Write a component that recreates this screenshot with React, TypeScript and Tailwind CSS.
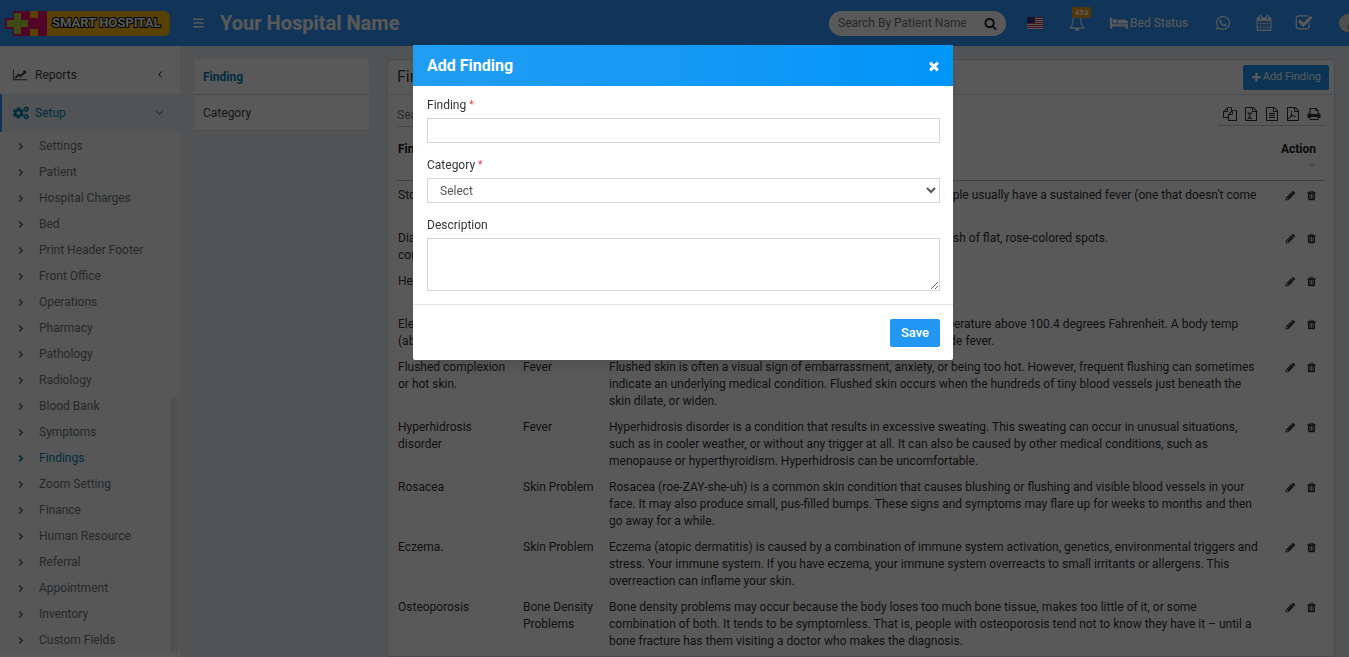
import React, { useState } from "react";
import { FaAngleRight, FaBars, FaCogs, FaWhatsapp, FaUser } from "react-icons/fa";

const paths = {
  filesO: "M1696 384q40 0 68 28t28 68v1216q0 40-28 68t-68 28H736q-40 0-68-28t-28-68v-288H96q-40 0-68-28t-28-68V672q0-40 20-88t48-76l408-408q28-28 76-48t88-20h416q40 0 68 28t28 68v328q68-40 128-40h416zm-544 213L853 896h299V597zM512 213L213 512h299V213zm196 647l316-316V128H640v416q0 40-28 68t-68 28H128v640h512v-256q0-40 20-88t48-76zm956 804V512h-416v416q0 40-28 68t-68 28H768v640h896z",
  file: "M1596 380q28 28 48 76t20 88v1152q0 40-28 68t-68 28H224q-40 0-68-28t-28-68V96q0-40 28-68T224 0h896q40 0 88 20t76 48zm-444-244v376h376q-10-29-22-41l-313-313q-12-12-41-22zm384 1528V640h-416q-40 0-68-28t-28-68V128H256v1536h1280z",
  fileLines: "M512 800q0-14 9-23t23-9h704q14 0 23 9t9 23v64q0 14-9 23t-23 9H544q-14 0-23-9t-9-23v-64zm736 224q14 0 23 9t9 23v64q0 14-9 23t-23 9H544q-14 0-23-9t-9-23v-64q0-14 9-23t23-9h704zm0 256q14 0 23 9t9 23v64q0 14-9 23t-23 9H544q-14 0-23-9t-9-23v-64q0-14 9-23t23-9h704z",
  excelX: "M429 1430v106h281v-106h-75l103-161 60 117q5 10 10 22l5 22h-71v106h291v-106h-68l-206-300 203-309h66V715H756v106h73l-98 155-70-122-12-33h64V715H433v106h68l199 297-202 312z",
  pdfA: "M894 1071q33 26 84 56 59-7 117-7 147 0 177 49 16 22 2 52 0 1-1 2l-2 2v1q-6 38-71 38-48 0-115-20t-130-53q-221 24-392 83-153 262-242 262-15 0-28-7l-24-12q-1-1-6-5-10-10-6-36 9-40 56-91.500t132-96.500q14-9 23 6 2 2 2 4 52-85 107-197 68-136 104-262-24-82-30.500-159.500T655 552q11-40 42-40h22q23 0 35 15 18 21 9 68-2 6-4 8 1 3 1 8v30q-2 123-14 192 55 164 148 238z",
  pencil: "M491 1536l91-91-235-235-91 91v107h128v128h107zm523-928q0-22-22-22-10 0-17 7l-542 542q-7 7-7 17 0 22 22 22 10 0 17-7l542-542q7-7 7-17zm-54-192l416 416-832 832H128v-416zm683 96q0 53-37 90l-166 166-416-416 166-165q36-38 90-38 53 0 91 38l235 234q37 39 37 91z",
  trash: "M704 1376V672q0-14-9-23t-23-9h-64q-14 0-23 9t-9 23v704q0 14 9 23t23 9h64q14 0 23-9t9-23zm256 0V672q0-14-9-23t-23-9h-64q-14 0-23 9t-9 23v704q0 14 9 23t23 9h64q14 0 23-9t9-23zm256 0V672q0-14-9-23t-23-9h-64q-14 0-23 9t-9 23v704q0 14 9 23t23 9h64q14 0 23-9t9-23zM672 384h448l-48-117q-7-9-17-11H738q-10 2-17 11zm928 32v64q0 14-9 23t-23 9h-96v948q0 83-47 143.500t-113 60.500H480q-66 0-113-58.500T320 1464V512h-96q-14 0-23-9t-9-23v-64q0-14 9-23t23-9h309l70-167q15-37 54-63t79-26h320q40 0 79 26t54 63l70 167h309q14 0 23 9t9 23z",
  print: "M448 1536h896v-256H448v256zm0-640h896V512h-160q-40 0-68-28t-28-68V256H448v640zm1152 64q0-26-19-45t-45-19-45 19-19 45 19 45 45 19 45-19 19-45zm128 0v416q0 13-9.500 22.500t-22.500 9.500h-224v160q0 40-28 68t-68 28H416q-40 0-68-28t-28-68v-160H96q-13 0-22.500-9.500T64 1376V960q0-79 56.500-135.500T256 768h64V224q0-40 28-68t68-28h672q40 0 88 20t76 48l152 152q28 28 48 76t20 88v256h64q79 0 135.500 56.500T1728 960z",
  angleRight: "M1171 960q0 13-10 23l-466 466q-10 10-23 10t-23-10l-50-50q-10-10-10-23t10-23l393-393-393-393q-10-10-10-23t10-23l50-50q10-10 23-10t23 10l466 466q10 10 10 23z",
  bell: "M912 1696q0-16-16-16-59 0-101.500-42.500T752 1536q0-16-16-16t-16 16q0 73 51.500 124.500T896 1712q16 0 16-16zM246 1408h1300q-266-300-266-832 0-51-24-105t-69-103-121.500-80.500T896 256t-169.500 31.500T605 368t-69 103-24 105q0 532-266 832zm1482 0q0 52-38 90t-90 38h-448q0 106-75 181t-181 75-181-75-75-181H192q-52 0-90-38t-38-90q50-42 91-88t85-119.500 74.500-158.500 50-206T384 576q0-152 117-282.500T808 135q-8-19-8-39 0-40 28-68t68-28 68 28 28 68q0 20-8 39 190 28 307 158.500T1408 576q0 139 19.500 260t50 206 74.500 158.500 85 119.500 91 88z",
  times: "M1490 1322q0 40-28 68l-136 136q-28 28-68 28t-68-28l-294-294-294 294q-28 28-68 28t-68-28l-136-136q-28-28-28-68t28-68l294-294-294-294q-28-28-28-68t28-68l136-136q28-28 68-28t68 28l294 294 294-294q28-28 68-28t68 28l136 136q28 28 28 68t-28 68l-294 294 294 294q28 28 28 68z",
  plus: "M1600 736v192q0 40-28 68t-68 28h-416v416q0 40-28 68t-68 28H800q-40 0-68-28t-28-68v-416H288q-40 0-68-28t-28-68V736q0-40 28-68t68-28h416V224q0-40 28-68t68-28h192q40 0 68 28t28 68v416h416q40 0 68 28t28 68z",
  search: "M1216 832q0-185-131.500-316.500T768 384 451.500 515.500 320 832t131.500 316.500T768 1280t316.500-131.500T1216 832zm512 832q0 52-38 90t-90 38q-54 0-90-38l-343-342q-179 124-399 124-143 0-273.500-55.500t-225-150-150-225T64 832t55.500-273.500 150-225 225-150T768 128t273.500 55.500 225 150 150 225T1472 832q0 220-124 399l343 343q37 37 37 90z",
  checkSquare: "M1472 930v318q0 119-84.500 203.500T1184 1536H352q-119 0-203.500-84.500T64 1248V416q0-119 84.500-203.500T352 128h832q63 0 117 25 15 7 18 23 3 17-9 29l-49 49q-10 10-23 10-3 0-9-2-23-6-45-6H352q-66 0-113 47t-47 113v832q0 66 47 113t113 47h832q66 0 113-47t47-113v-254q0-13 9-22l64-64q10-10 23-10 6 0 12 3 20 8 20 29zm231-489l-814 814q-24 24-57 24t-57-24l-430-430q-24-24-24-57t24-57l110-110q24-24 57-24t57 24l263 263 647-647q24-24 57-24t57 24l110 110q24 24 24 57t-24 57z",
  lineChart: "M2048 1536v128H0V128h128v1408h1920zM1920 288v435q0 21-19.500 29.500T1865 745l-121-121-633 633q-10 10-23 10t-23-10L832 1024l-416 416-192-192 585-585q10-10 23-10t23 10l233 233 464-464-121-121q-16-16-7.500-35.500T1453 256h435q14 0 23 9t9 23z",
  bed: "M256 1024h1728q26 0 45 19t19 45v448h-256v-256H256v256H0V320q0-26 19-45t45-19h128q26 0 45 19t19 45v704zm576-320q0-106-75-181t-181-75-181 75-75 181 75 181 181 75 181-75 75-181zm1216 256v-64q0-159-112.500-271.500T1664 512H960q-26 0-45 19t-19 45v384h1152z",
  calendar: "M192 1664h288v-288H192v288zm352 0h320v-288H544v288zm-352-352h288V992H192v320zm352 0h320V992H544v320zM192 928h288V640H192v288zm736 736h320v-288H928v288zM544 928h320V640H544v288zm768 736h288v-288h-288v288zm-384-352h320V992H928v320zM576 448V160q0-13-9.500-22.500T544 128h-64q-13 0-22.500 9.500T448 160v288q0 13 9.500 22.500T480 480h64q13 0 22.500-9.500T576 448zm736 864h288V992h-288v320zM928 928h320V640H928v288zm384 0h288V640h-288v288zm32-480V160q0-13-9.500-22.500T1312 128h-64q-13 0-22.500 9.500T1216 160v288q0 13 9.500 22.500t22.500 9.500h64q13 0 22.500-9.500t9.500-22.500zm384-64v1280q0 52-38 90t-90 38H192q-52 0-90-38t-38-90V384q0-52 38-90t90-38h128v-96q0-66 47-113T480 0h64q66 0 113 47t47 113v96h384v-96q0-66 47-113t113-47h64q66 0 113 47t47 113v96h128q52 0 90 38t38 90z",
};

function Icon({ d, className, wide = false }: { d: string; className: string; wide?: boolean }) {
  return (
    <svg viewBox={wide ? "0 0 2048 1792" : "0 0 1792 1792"} fill="currentColor" className={className} aria-hidden="true">
      <path d={d} />
    </svg>
  );
}

const setupLinks = [
  "Settings", "Patient", "Hospital Charges", "Bed", "Print Header Footer", "Front Office", "Operations",
  "Pharmacy", "Pathology", "Radiology", "Blood Bank", "Symptoms", "Findings", "Zoom Setting", "Finance",
  "Human Resource", "Referral", "Appointment", "Inventory", "Custom Fields",
];

const exportIcons = [
  { title: "Copy", d: paths.filesO },
  { title: "Excel", d: paths.file + paths.excelX },
  { title: "CSV", d: paths.file + paths.fileLines },
  { title: "PDF", d: paths.file + paths.pdfA },
  { title: "Print", d: paths.print },
];

const findings = [
  {
    name: "Stomach pain",
    category: "Fever",
    description: "Typhoid fever and paratyphoid fever have similar symptoms. People usually have a sustained fever (one that doesn't come and go).",
  },
  {
    name: "Diarrhea or constipation",
    category: "Fever",
    description: "Some people with typhoid fever or paratyphoid fever develop a rash of flat, rose-colored spots.",
  },
  { name: "Headache", category: "Fever", description: "Headache and general weakness are common\nsigns of the illness." },
  {
    name: "Elevated body temp (above 100.4)",
    category: "Fever",
    description: "The medical community generally defines a fever as a body temperature above 100.4 degrees Fahrenheit. A body temp between 100.4 and 102.2 degree is usually considered a low-grade fever.",
  },
  {
    name: "Flushed complexion or hot skin.",
    category: "Fever",
    description: "Flushed skin is often a visual sign of embarrassment, anxiety, or being too hot. However, frequent flushing can sometimes indicate an underlying medical condition. Flushed skin occurs when the hundreds of tiny blood vessels just beneath the skin dilate, or widen.",
  },
  {
    name: "Hyperhidrosis disorder",
    category: "Fever",
    description: "Hyperhidrosis disorder is a condition that results in excessive sweating. This sweating can occur in unusual situations, such as in cooler weather, or without any trigger at all. It can also be caused by other medical conditions, such as menopause or hyperthyroidism. Hyperhidrosis can be uncomfortable.",
  },
  {
    name: "Rosacea",
    category: "Skin Problem",
    description: "Rosacea (roe-ZAY-she-uh) is a common skin condition that causes blushing or flushing and visible blood vessels in your face. It may also produce small, pus-filled bumps. These signs and symptoms may flare up for weeks to months and then go away for a while.",
  },
  {
    name: "Eczema.",
    category: "Skin Problem",
    description: "Eczema (atopic dermatitis) is caused by a combination of immune system activation, genetics, environmental triggers and stress. Your immune system. If you have eczema, your immune system overreacts to small irritants or allergens. This overreaction can inflame your skin.",
  },
  {
    name: "Osteoporosis",
    category: "Bone Density Problems",
    description: "Bone density problems may occur because the body loses too much bone tissue, makes too little of it, or some combination of both. It tends to be symptomless. That is, people with osteoporosis tend not to know they have it – until a bone fracture has them visiting a doctor who makes the diagnosis.",
  },
];

function Logo() {
  return (
    <a href="#" className="flex h-[25px] w-[165px] shrink-0 items-center" aria-label="Smart Hospital">
      <svg viewBox="0 0 42 25" className="h-[25px] w-[42px] shrink-0" aria-hidden="true">
        <path d="M8 0H42V25H8V18H0V7H8Z" fill="#ee1070" />
        <path d="M25 0h8v7h-8zM25 18h8v7h-8z" fill="#fdbb0b" />
        <path d="M9 2h7v7h7v7h-7v7H9v-7H2V9h7z" fill="#b4d63c" />
      </svg>
      <span className="flex h-[25px] flex-1 items-center rounded-r-md bg-[#fdbb0b] pl-[5px] font-['Liberation_Sans_Narrow','Roboto',sans-serif] text-[13px] font-bold whitespace-nowrap text-white [paint-order:stroke_fill] [-webkit-text-stroke:2px_#000]">
        SMART HOSPITAL
      </span>
    </a>
  );
}

function UsFlag() {
  return (
    <svg viewBox="0 0 16 12" className="h-3 w-4" aria-hidden="true">
      <path d="M0 0h16v12H0z" fill="#f3eef0" />
      <path d="M0 0h16v1H0zM0 2h16v1H0zM0 4h16v1H0zM0 6h16v1H0zM0 8h16v1H0zM0 10h16v1H0z" fill="#d3455b" />
      <path d="M0 0h8v6H0z" fill="#363b78" />
    </svg>
  );
}

function TopBar() {
  return (
    <header className="flex h-[46px] shrink-0 items-center overflow-hidden bg-[#3398fb] pl-[5px] text-white">
      <Logo />
      <button type="button" aria-label="Toggle navigation" className="ml-[23px]">
        <FaBars className="h-3 w-[11px]" />
      </button>
      <span className="ml-4 text-xl leading-[26px] font-bold whitespace-nowrap">Your Hospital Name</span>
      <div className="-mr-[15px] ml-auto flex items-center">
        <form className="flex h-[25px] w-[177px] items-center rounded-full bg-white pr-[9px] pl-[9px]">
          <input type="text" aria-label="Search By Patient Name" placeholder="Search By Patient Name" className="w-[128px] text-xs outline-none placeholder:text-[#777]" />
          <button type="submit" aria-label="Search" className="ml-auto text-[#222]">
            <Icon d={paths.search} className="h-[13px] w-[13px]" />
          </button>
        </form>
        <a href="#" aria-label="Language" className="ml-[21px]"><UsFlag /></a>
        <a href="#" aria-label="Notifications" className="relative ml-[26px]">
          <Icon d={paths.bell} className="h-4 w-4" />
          <span className="absolute -top-2 left-[3px] flex h-[11px] w-[19px] items-center justify-center rounded-xs bg-[#f39c12] text-[8px] font-bold">453</span>
        </a>
        <a href="#" className="ml-[25px] flex items-center gap-[2px] text-xs">
          <Icon d={paths.bed} wide className="h-4 w-[18px]" />
          Bed Status
        </a>
        <a href="#" aria-label="WhatsApp" className="ml-[27px]"><FaWhatsapp className="h-4 w-4" /></a>
        <a href="#" aria-label="Calendar" className="ml-[25px]"><Icon d={paths.calendar} className="h-4 w-4" /></a>
        <a href="#" aria-label="Tasks" className="ml-[23px]"><Icon d={paths.checkSquare} className="h-[18px] w-[18px]" /></a>
        <a href="#" aria-label="Profile" className="ml-[26px] flex h-[18px] w-[25px] items-center justify-center rounded-full bg-[#e5e5e5] text-[#aaa]">
          <FaUser className="h-3 w-3" />
        </a>
      </div>
    </header>
  );
}

function Sidebar() {
  return (
    <aside className="relative w-[180px] shrink-0 bg-white text-xs text-[#444]">
      <a href="#" className="mt-[10px] flex h-[38px] items-center pr-[14px] pl-[13px]">
        <Icon d={paths.lineChart} wide className="h-3 w-[14px]" />
        <span className="ml-2">Reports</span>
        <Icon d={paths.angleRight} className="ml-auto h-3 w-3 rotate-180" />
      </a>
      <a href="#" className="flex h-[38px] items-center border-l-2 border-[#3398fb] bg-[#e9edf4] pr-[14px] pl-[11px] text-[#0084b4]">
        <FaCogs className="h-[14px] w-4" />
        <span className="ml-[6px]">Setup</span>
        <Icon d={paths.angleRight} className="ml-auto h-3 w-3 rotate-90" />
      </a>
      <nav className="bg-[#f7faf7] pt-px text-[#70757f]">
        {setupLinks.map((name) => (
          <a
            key={name}
            href="#"
            className={name === "Findings" ? "flex h-[26px] items-center pl-4 text-[#0084b4]" : "flex h-[26px] items-center pl-4"}
          >
            <FaAngleRight className="h-[11px] w-[10px]" />
            <span className="ml-[13px]">{name}</span>
          </a>
        ))}
      </nav>
      <div className="absolute right-px bottom-1 h-[255px] w-[9px] rounded-full bg-[#e6e6e6]" />
    </aside>
  );
}

function FindingPanel({ onAdd }: { onAdd: () => void }) {
  return (
    <section className="min-w-0 flex-1 rounded-t-sm border border-[#cfd4dc] bg-white">
      <div className="flex h-[35px] items-center justify-between border-b border-[#dfe2e6] pr-[5px] pl-[9px]">
        <h1 className="text-base text-[#444]">Finding List</h1>
        <button type="button" onClick={onAdd} className="flex h-[25px] items-center gap-px rounded-xs bg-[#2196f3] px-2 text-[11px] text-white">
          <Icon d={paths.plus} className="h-[11px] w-[11px]" />
          Add Finding
        </button>
      </div>
      <div className="px-[9px]">
        <div className="mt-2 flex items-start justify-between">
          <input type="text" aria-label="Search findings" placeholder="Search..." className="h-6 w-[150px] border-b border-[#ccc] text-xs outline-none placeholder:text-[#777]" />
          <div className="flex h-[23px] items-center gap-[7px] border-b border-[#ccc] pr-1 pl-[5px] text-[#333]">
            {exportIcons.map((item) => (
              <button key={item.title} type="button" title={item.title}>
                <Icon d={item.d} className="h-[14px] w-[14px]" />
              </button>
            ))}
          </div>
        </div>
        <table className="mt-[7px] w-full table-fixed text-xs leading-[17px] text-[#333]">
          <thead>
            <tr className="h-[46px] border-b border-[#bbb] text-left align-top text-[#222]">
              <th className="w-[125px] px-px pt-[7px] font-bold">Finding</th>
              <th className="w-[86px] px-px pt-[7px] font-bold">Category</th>
              <th className="px-px pt-[7px] font-bold">Description</th>
              <th className="w-12 pt-[7px] pr-[9px] text-right font-bold">
                Action
                <span className="mt-[6px] ml-auto block h-0 w-0 border-x-4 border-t-4 border-x-transparent border-t-[#ccc]" />
              </th>
            </tr>
          </thead>
          <tbody>
            {findings.map((item) => (
              <tr key={item.name} className="align-top">
                <td className="pt-[6px] pr-3 pb-[3px] pl-px">{item.name}</td>
                <td className="pt-[6px] pr-1 pb-[3px] pl-px">{item.category}</td>
                <td className="pt-[6px] pr-[14px] pb-[3px] pl-px whitespace-pre-line">{item.description}</td>
                <td className="pt-[9px] pr-2">
                  <div className="flex justify-end gap-[10px]">
                    <button type="button" aria-label="Edit"><Icon d={paths.pencil} className="h-[11px] w-[11px]" /></button>
                    <button type="button" aria-label="Delete"><Icon d={paths.trash} className="h-[11px] w-[11px]" /></button>
                  </div>
                </td>
              </tr>
            ))}
          </tbody>
        </table>
      </div>
    </section>
  );
}

function AddFindingModal({ onClose }: { onClose: () => void }) {
  return (
    <div className="fixed inset-0 flex items-start justify-center bg-black/65 pt-[45px] pl-[17px]">
      <div role="dialog" aria-label="Add Finding" className="w-[540px] overflow-hidden rounded-xs bg-white shadow-lg">
        <div className="flex h-[41px] items-center justify-between bg-linear-to-r from-[#209df3] to-[#0095f8] pr-3 pl-[14px] text-white">
          <h2 className="text-base font-bold">Add Finding</h2>
          <button type="button" onClick={onClose} aria-label="Close">
            <Icon d={paths.times} className="h-[14px] w-[14px]" />
          </button>
        </div>
        <form>
          <div className="flex flex-col gap-[13px] pt-[10px] pr-[13px] pb-[13px] pl-[14px] text-xs text-[#333]">
            <div className="flex flex-col gap-1">
              <label htmlFor="finding" className="flex gap-[3px] leading-[18px]">Finding <span className="text-[10px] text-[#f8283f]">*</span></label>
              <input id="finding" type="text" className="h-[25px] border border-[#d0d4de] px-3 outline-none" />
            </div>
            <div className="flex flex-col gap-1">
              <label htmlFor="category" className="flex gap-[3px] leading-[18px]">Category <span className="text-[10px] text-[#f8283f]">*</span></label>
              <select id="category" className="h-[25px] border border-[#d0d4de] bg-white px-2 text-[#555] outline-none">
                <option>Select</option>
              </select>
            </div>
            <div className="flex flex-col gap-1">
              <label htmlFor="description" className="leading-[18px]">Description</label>
              <textarea id="description" className="h-[53px] resize border border-[#d0d4de] px-3 outline-none" />
            </div>
          </div>
          <div className="flex justify-end border-t border-[#e5e5e5] px-[13px] pt-[14px] pb-[13px]">
            <button type="button" className="h-7 w-[50px] rounded-xs bg-[#2196f3] text-[13px] font-medium text-white">Save</button>
          </div>
        </form>
      </div>
    </div>
  );
}

export default function App() {
  const [open, setOpen] = useState(true);

  return (
    <div className="flex min-h-screen flex-col bg-[#ebeef4] font-['Roboto',sans-serif]">
      <TopBar />
      <div className="flex flex-1">
        <Sidebar />
        <main className="flex min-w-0 flex-1 gap-[18px] px-[14px] pt-[13px]">
          <nav className="w-[175px] shrink-0 text-xs text-[#444]">
            <a href="#" className="flex h-9 items-center rounded-t-sm border-b border-[#d5d8dc] bg-white px-[9px] font-bold text-[#0084b4]">Finding</a>
            <a href="#" className="flex h-9 items-center border-b border-[#d5d8dc] bg-white px-[9px]">Category</a>
          </nav>
          <FindingPanel onAdd={() => setOpen(true)} />
        </main>
      </div>
      {open && <AddFindingModal onClose={() => setOpen(false)} />}
    </div>
  );
}
